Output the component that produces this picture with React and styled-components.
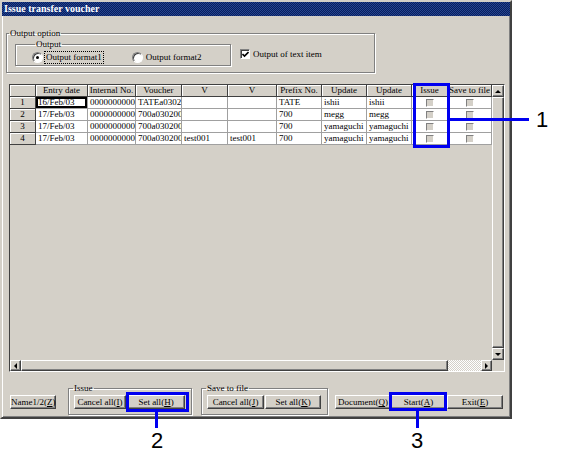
import React from 'react';
import styled, { createGlobalStyle, css } from 'styled-components';

const GlobalStyle = createGlobalStyle`
  html, body {
    margin: 0;
    padding: 0;
    background: #fff;
  }
  body {
    font-family: "Liberation Serif", "Times New Roman", serif;
    font-size: 9px;
    color: #000;
  }
  * {
    box-sizing: border-box;
  }
`;

const FACE = '#d4d0c8';

const raised = css`
  border: 1px solid;
  border-color: #fff #404040 #404040 #fff;
  box-shadow: inset -1px -1px #808080;
  background: ${FACE};
`;

const Stage = styled.div`
  position: relative;
  width: 563px;
  height: 460px;
  overflow: hidden;
`;

const Window = styled.div`
  width: 512px;
  height: 419px;
  background: ${FACE};
  border: 2px solid;
  border-color: ${FACE} #404040 #404040 ${FACE};
  box-shadow: inset 1px 1px #fff, inset -1px -1px #808080;
  display: flex;
  flex-direction: column;
`;

const TitleBar = styled.div`
  height: 14px;
  padding-left: 2px;
  background: repeating-conic-gradient(#07205f 0 25%, #26438f 0 50%) 0 0 / 2px 2px;
  color: #fff;
  font-weight: bold;
  font-size: 10px;
  line-height: 14px;
  white-space: nowrap;
`;

// etched group box
const Group = styled.fieldset`
  margin: 0;
  min-width: 0;
  border: 1px solid #808080;
  box-shadow: 1px 1px 0 #fff, inset 1px 1px 0 #fff;
  display: flex;
`;

const Legend = styled.legend`
  padding: 0 1px;
  margin-left: ${(p) => p.$offset ?? 0}px;
  font-size: 9px;
  line-height: 11px;
`;

const OptionGroup = styled(Group)`
  width: 369px;
  margin: 12px 0 0 4px;
  padding: 0 0 6px 0;
  align-items: flex-start;
`;

const OutputGroup = styled(Group)`
  width: 216px;
  margin-left: 8px;
  padding: 0 0 1px 16px;
`;

const RadioRow = styled.div`
  display: flex;
  align-items: center;
  gap: 28px;
  height: 14px;
`;

const Option = styled.label`
  display: flex;
  align-items: center;
  gap: 1px;
`;

const Radio = styled.span`
  position: relative;
  width: 11px;
  height: 11px;
  border-radius: 50%;
  background: #fff;
  border: 1px solid;
  border-color: #808080 #fff #fff #808080;
  box-shadow: inset 1px 1px #404040;
  ${(p) =>
    p.$checked &&
    css`
      &::after {
        content: '';
        position: absolute;
        left: 3px;
        top: 3px;
        width: 3px;
        height: 3px;
        border-radius: 50%;
        background: #000;
      }
    `}
`;

const OptionText = styled.span`
  padding: 1px 2px;
  line-height: 11px;
  outline: ${(p) => (p.$focus ? '1px dotted #000' : 'none')};
  outline-offset: -1px;
`;

const CheckOption = styled.label`
  display: flex;
  align-items: center;
  gap: 3px;
  margin: 10px 0 0 9px;
`;

const CheckBox = styled.span`
  width: 10px;
  height: 10px;
  background: #fff;
  border: 1px solid;
  border-color: #808080 #fff #fff #808080;
  box-shadow: inset 1px 1px #404040;
  display: flex;
  align-items: center;
  justify-content: center;
`;

const GridFrame = styled.div`
  width: 496px;
  height: 288px;
  margin: 11px 0 0 7px;
  border: 1px solid;
  border-color: #404040 #fff #fff #404040;
  display: grid;
  grid-template-columns: 482px 12px;
  grid-template-rows: 275px 11px;
`;

const Sheet = styled.div`
  background: ${FACE};
  overflow: hidden;
`;

const COLS = '26px 52px 48px 46px 46px 49px 45px 45px 45px 36px 44px';

const Row = styled.div`
  display: grid;
  grid-template-columns: ${COLS};
  height: 12px;
`;

const HeadCell = styled.div`
  background: ${FACE};
  border-right: 1px solid #404040;
  border-bottom: 1px solid #404040;
  box-shadow: inset 1px 1px #fff;
  text-align: center;
  line-height: 11px;
  white-space: nowrap;
  overflow: hidden;
`;

const Cell = styled.div`
  background: #fff;
  border-right: 1px solid #a0a0a0;
  border-bottom: 1px solid #a0a0a0;
  padding-left: 2px;
  line-height: 11px;
  white-space: nowrap;
  overflow: hidden;
  ${(p) =>
    p.$selected &&
    css`
      box-shadow: inset 0 0 0 2px #000;
    `}
`;

const CheckCell = styled(Cell)`
  display: flex;
  align-items: center;
  justify-content: center;
  padding: 0;
`;

const GrayCheck = styled.span`
  width: 8px;
  height: 8px;
  background: ${FACE};
  border: 1px solid;
  border-color: #808080 #fff #fff #808080;
`;

const VScroll = styled.div`
  display: flex;
  flex-direction: column;
`;

const HScroll = styled.div`
  display: flex;
`;

const ArrowBtn = styled.div`
  ${raised};
  width: ${(p) => p.$w}px;
  height: ${(p) => p.$h}px;
  flex: none;
  display: flex;
  align-items: center;
  justify-content: center;
`;

const arrows = {
  up: css`
    border-left: 3px solid transparent;
    border-right: 3px solid transparent;
    border-bottom: 3px solid #000;
  `,
  down: css`
    border-left: 3px solid transparent;
    border-right: 3px solid transparent;
    border-top: 3px solid #000;
  `,
  left: css`
    border-top: 3px solid transparent;
    border-bottom: 3px solid transparent;
    border-right: 3px solid #000;
  `,
  right: css`
    border-top: 3px solid transparent;
    border-bottom: 3px solid transparent;
    border-left: 3px solid #000;
  `,
};

const Arrow = styled.span`
  width: 0;
  height: 0;
  ${(p) => arrows[p.$dir]};
`;

const Thumb = styled.div`
  ${raised};
  flex: ${(p) => (p.$w ? 'none' : '1')};
  width: ${(p) => (p.$w ? `${p.$w}px` : 'auto')};
`;

const Track = styled.div`
  flex: 1;
  background: repeating-conic-gradient(#fff 0 25%, ${FACE} 0 50%) 0 0 / 2px 2px;
`;

const Corner = styled.div`
  background: ${FACE};
`;

const BottomBar = styled.div`
  display: flex;
  align-items: flex-end;
  margin: 11px 0 0 8px;
`;

const ButtonGroup = styled(Group)`
  padding: 1px 6px 5px 5px;
  gap: 1px;
  margin-left: ${(p) => p.$ml}px;
`;

const Button = styled.button`
  ${raised};
  width: ${(p) => p.$w}px;
  height: 14px;
  padding: 0;
  margin-left: ${(p) => p.$ml || 0}px;
  margin-bottom: ${(p) => (p.$loose ? 6 : 0)}px;
  font-family: "Liberation Serif", "Times New Roman", serif;
  font-size: 9px;
  line-height: 12px;
  color: #000;
  white-space: nowrap;
  flex: none;
`;

const CalloutBox = styled.div`
  position: absolute;
  left: ${(p) => p.$x}px;
  top: ${(p) => p.$y}px;
  width: ${(p) => p.$w}px;
  height: ${(p) => p.$h}px;
  border: 3px solid #0000f0;
`;

const CalloutLine = styled.div`
  position: absolute;
  left: ${(p) => p.$x}px;
  top: ${(p) => p.$y}px;
  width: ${(p) => p.$w}px;
  height: ${(p) => p.$h}px;
  background: #0000f0;
`;

const CalloutNum = styled.div`
  position: absolute;
  left: ${(p) => p.$x}px;
  top: ${(p) => p.$y}px;
  width: 20px;
  text-align: center;
  font-family: "Liberation Sans", Arial, sans-serif;
  font-size: 22px;
  line-height: 22px;
  color: #000;
`;

const columns = ['', 'Entry date', 'Internal No.', 'Voucher', 'V', 'V', 'Prefix No.', 'Update', 'Update', 'Issue', 'Save to file'];

const rows = [
  { n: 1, date: '16/Feb/03', internal: '0000000000001', voucher: 'TATEa030200001', v1: '', v2: '', prefix: 'TATE', u1: 'ishii', u2: 'ishii' },
  { n: 2, date: '17/Feb/03', internal: '0000000000002', voucher: '700a030200001', v1: '', v2: '', prefix: '700', u1: 'megg', u2: 'megg' },
  { n: 3, date: '17/Feb/03', internal: '0000000000003', voucher: '700a030200002', v1: '', v2: '', prefix: '700', u1: 'yamaguchi', u2: 'yamaguchi' },
  { n: 4, date: '17/Feb/03', internal: '0000000000004', voucher: '700a030200003', v1: 'test001', v2: 'test001', prefix: '700', u1: 'yamaguchi', u2: 'yamaguchi' },
];

const Key = ({ label, k }) => (
  <>
    {label}(<u>{k}</u>)
  </>
);

export default function App() {
  return (
    <Stage>
      <GlobalStyle />
      <Window>
        <TitleBar>Issue transfer voucher</TitleBar>

        <OptionGroup>
          <Legend $offset={2}>Output option</Legend>
          <OutputGroup>
            <Legend $offset={3}>Output</Legend>
            <RadioRow>
              <Option>
                <Radio $checked />
                <OptionText $focus>Output format1</OptionText>
              </Option>
              <Option>
                <Radio />
                <OptionText>Output format2</OptionText>
              </Option>
            </RadioRow>
          </OutputGroup>
          <CheckOption>
            <CheckBox>
              <svg width="7" height="7" viewBox="0 0 7 7">
                <path d="M0.5 3 L2.5 5 L6.5 1" fill="none" stroke="#000" strokeWidth="1.6" />
              </svg>
            </CheckBox>
            <span>Output of text item</span>
          </CheckOption>
        </OptionGroup>

        <GridFrame>
          <Sheet>
            <Row>
              {columns.map((c, i) => (
                <HeadCell key={i}>{c}</HeadCell>
              ))}
            </Row>
            {rows.map((r) => (
              <Row key={r.n}>
                <HeadCell>{r.n}</HeadCell>
                <Cell $selected={r.n === 1}>{r.date}</Cell>
                <Cell>{r.internal}</Cell>
                <Cell>{r.voucher}</Cell>
                <Cell>{r.v1}</Cell>
                <Cell>{r.v2}</Cell>
                <Cell>{r.prefix}</Cell>
                <Cell>{r.u1}</Cell>
                <Cell>{r.u2}</Cell>
                <CheckCell>
                  <GrayCheck />
                </CheckCell>
                <CheckCell>
                  <GrayCheck />
                </CheckCell>
              </Row>
            ))}
          </Sheet>
          <VScroll>
            <ArrowBtn $w={12} $h={12}>
              <Arrow $dir="up" />
            </ArrowBtn>
            <Thumb />
            <ArrowBtn $w={12} $h={12}>
              <Arrow $dir="down" />
            </ArrowBtn>
          </VScroll>
          <HScroll>
            <ArrowBtn $w={11} $h={11}>
              <Arrow $dir="left" />
            </ArrowBtn>
            <Thumb $w={427} />
            <Track />
            <ArrowBtn $w={11} $h={11}>
              <Arrow $dir="right" />
            </ArrowBtn>
          </HScroll>
          <Corner />
        </GridFrame>

        <BottomBar>
          <Button $w={46} $loose>
            <Key label="Name1/2" k="Z" />
          </Button>
          <ButtonGroup $ml={12}>
            <Legend $offset={-1}>Issue</Legend>
            <Button $w={52}>
              <Key label="Cancel all" k="I" />
            </Button>
            <Button $w={58}>
              <Key label="Set all" k="H" />
            </Button>
          </ButtonGroup>
          <ButtonGroup $ml={9}>
            <Legend $offset={-1}>Save to file</Legend>
            <Button $w={57}>
              <Key label="Cancel all" k="J" />
            </Button>
            <Button $w={56}>
              <Key label="Set all" k="K" />
            </Button>
          </ButtonGroup>
          <Button $w={56} $ml={7} $loose>
            <Key label="Document" k="Q" />
          </Button>
          <Button $w={55} $loose>
            <Key label="Start" k="A" />
          </Button>
          <Button $w={56} $ml={1} $loose>
            <Key label="Exit" k="E" />
          </Button>
        </BottomBar>
      </Window>

      <CalloutBox $x={413} $y={83} $w={37} $h={65} />
      <CalloutLine $x={449} $y={118} $w={80} $h={3} />
      <CalloutNum $x={532} $y={109}>1</CalloutNum>

      <CalloutBox $x={126} $y={392} $w={63} $h={20} />
      <CalloutLine $x={155} $y={411} $w={3} $h={17} />
      <CalloutNum $x={147} $y={430}>2</CalloutNum>

      <CalloutBox $x={389} $y={392} $w={58} $h={19} />
      <CalloutLine $x={416} $y={410} $w={3} $h={18} />
      <CalloutNum $x={407} $y={430}>3</CalloutNum>
    </Stage>
  );
}
